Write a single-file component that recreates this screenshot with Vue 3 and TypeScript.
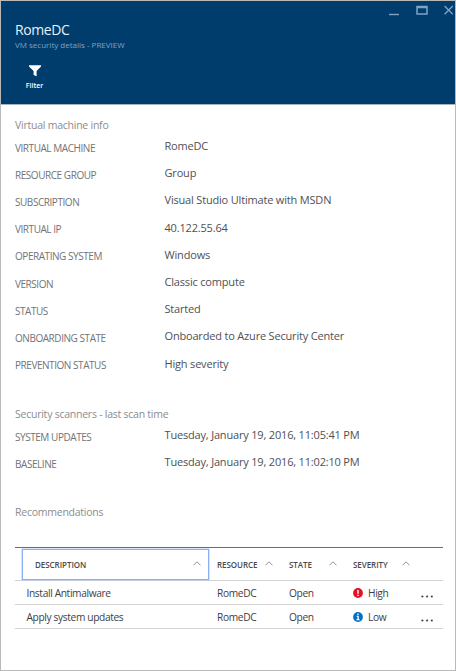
<script setup lang="ts">
interface Field { label: string; value: string }
interface Recommendation { description: string; resource: string; state: string; severity: 'High' | 'Low' }

const vmInfo: Field[] = [
  { label: 'VIRTUAL MACHINE', value: 'RomeDC' },
  { label: 'RESOURCE GROUP', value: 'Group' },
  { label: 'SUBSCRIPTION', value: 'Visual Studio Ultimate with MSDN' },
  { label: 'VIRTUAL IP', value: '40.122.55.64' },
  { label: 'OPERATING SYSTEM', value: 'Windows' },
  { label: 'VERSION', value: 'Classic compute' },
  { label: 'STATUS', value: 'Started' },
  { label: 'ONBOARDING STATE', value: 'Onboarded to Azure Security Center' },
  { label: 'PREVENTION STATUS', value: 'High severity' },
]
const scans: Field[] = [
  { label: 'SYSTEM UPDATES', value: 'Tuesday, January 19, 2016, 11:05:41 PM' },
  { label: 'BASELINE', value: 'Tuesday, January 19, 2016, 11:02:10 PM' },
]
const columns: string[] = ['DESCRIPTION', 'RESOURCE', 'STATE', 'SEVERITY']
const recommendations: Recommendation[] = [
  { description: 'Install Antimalware', resource: 'RomeDC', state: 'Open', severity: 'High' },
  { description: 'Apply system updates', resource: 'RomeDC', state: 'Open', severity: 'Low' },
]
</script>

<template>
  <main class="blade">
    <header class="head">
      <div class="controls">
        <svg width="64" height="12" viewBox="0 0 64 12">
          <path d="M0 10.5h10" stroke="#7fa3c4" stroke-width="1.4" />
          <path d="M28 2.5h10v7.6h-10z M28 3.4h10" fill="none" stroke="#7fa3c4" stroke-width="1.5" />
          <path d="M55.6 2l8.2 8.2M63.8 2l-8.2 8.2" stroke="#7fa3c4" stroke-width="1.4" />
        </svg>
      </div>
      <h1 class="title">RomeDC</h1>
      <p class="subtitle">VM security details - PREVIEW</p>
      <button class="filter" type="button">
        <svg width="12" height="12" viewBox="0 0 12 12">
          <path d="M0 0.3h12v1.2L7.6 6v5.2L4.6 10V6L0 1.5z" fill="#fff" />
        </svg>
        <span>Filter</span>
      </button>
    </header>

    <section class="section vm">
      <h2>Virtual machine info</h2>
      <dl>
        <div v-for="f in vmInfo" :key="f.label" class="field">
          <dt>{{ f.label }}</dt>
          <dd>{{ f.value }}</dd>
        </div>
      </dl>
    </section>

    <section class="section scans">
      <h2>Security scanners - last scan time</h2>
      <dl>
        <div v-for="f in scans" :key="f.label" class="field">
          <dt>{{ f.label }}</dt>
          <dd>{{ f.value }}</dd>
        </div>
      </dl>
    </section>

    <section class="section recs">
      <h2>Recommendations</h2>
      <div class="table">
        <div class="row header">
          <div v-for="(c, i) in columns" :key="c" class="th" :class="{ focused: i === 0, last: i === 3 }">
            <span>{{ c }}</span>
            <svg width="8" height="5" viewBox="0 0 8 5">
              <path d="M0.5 4.3L4 0.8l3.5 3.5" fill="none" stroke="#888" stroke-width="0.9" />
            </svg>
          </div>
        </div>
        <div v-for="r in recommendations" :key="r.description" class="row">
          <div class="td first">{{ r.description }}</div>
          <div class="td">{{ r.resource }}</div>
          <div class="td">{{ r.state }}</div>
          <div class="td severity">
            <svg width="10" height="10" viewBox="0 0 10 10">
              <circle cx="5" cy="5" r="4.9" :fill="r.severity === 'High' ? '#e81123' : '#0072c6'" />
              <path v-if="r.severity === 'High'" d="M5 1.9v3.9M5 6.7v1.4" stroke="#fff" stroke-width="1.4" />
              <path v-else d="M5 1.6v1.4M3.8 4.3H5.1v3.4M3.6 7.7h2.9" fill="none" stroke="#fff" stroke-width="1.3" />
            </svg>
            <span>{{ r.severity }}</span>
          </div>
          <div class="more">
            <svg width="13" height="3" viewBox="0 0 13 3">
              <circle cx="1.4" cy="1.5" r="1.1" fill="#444" />
              <circle cx="6.1" cy="1.5" r="1.1" fill="#444" />
              <circle cx="10.8" cy="1.5" r="1.1" fill="#444" />
            </svg>
          </div>
        </div>
      </div>
    </section>
  </main>
</template>

<style>
body { margin: 0; background: #fff; }
</style>

<style scoped>
.blade {
  box-sizing: border-box;
  width: 456px;
  height: 671px;
  border: 1px solid #b9b9b9;
  background: #fff;
  font-family: "Open Sans", "Noto Sans", sans-serif;
  font-size: 11px;
  color: #505054;
  overflow: hidden;
}
h1, h2, p, dl, dd { margin: 0; font-weight: 400; }
svg { display: block; flex: none; }
.head {
  box-sizing: border-box;
  height: 104px;
  padding-left: 14px;
  background: #003c6c;
  border-bottom: 1px solid #a9b4bd;
}
.controls { display: flex; justify-content: flex-end; height: 19px; padding-top: 3px; box-sizing: border-box; padding-right: 2px; }
.title { height: 20px; line-height: 20px; font-size: 14px; letter-spacing: -0.4px; color: #e6f1fa; }
.subtitle { height: 10px; line-height: 10px; font-size: 8px; color: #7fa3c4; }
.filter {
  display: flex;
  flex-direction: column;
  align-items: center;
  width: 39px;
  margin: 15px 0 0;
  padding: 0;
  border: 0;
  background: none;
  color: #fff;
  font: 600 7px/10px "Open Sans", sans-serif;
  gap: 4px;
}
.section { padding: 0 12px 0 14px; }
.section h2 { height: 18px; line-height: 18px; font-size: 10.5px; letter-spacing: -0.24px; color: #8c8c90; }
.vm { padding-top: 11px; height: 289px; box-sizing: border-box; }
.scans { padding-top: 11px; height: 98px; box-sizing: border-box; }
.field { display: grid; grid-template-columns: 149.5px 1fr; height: 27.2px; line-height: 18px; }
dt { padding-top: 4.6px; font-size: 10px; letter-spacing: -0.45px; color: #737377; }
dd { padding-top: 3px; letter-spacing: -0.18px; }
.recs { padding-top: 11px; }
.table { margin-top: 26px; border-top: 1px solid #6c6c6c; }
.row {
  display: grid;
  grid-template-columns: 202px 72px 64px 66px 1fr;
  align-items: center;
  height: 24px;
  box-sizing: border-box;
  border-bottom: 1px solid #d4d4d4;
}
.row.header { height: 33px; }
.th {
  display: flex;
  align-items: center;
  justify-content: space-between;
  height: 31px;
  box-sizing: border-box;
  padding-right: 16px;
  font-size: 8px;
  font-weight: 600;
  letter-spacing: -0.05px;
  color: #4a4a4e;
}
.th.last { padding-right: 9px; }
.th svg { margin-top: -2px; }
.focused { margin: 0 8px 0 7px; padding: 0 7px 0 12px; border: 1px solid #8aaef8; box-shadow: 0 0 0 0.5px #b4cafa; }
.td { line-height: 20px; white-space: nowrap; font-size: 10.2px; letter-spacing: -0.36px; color: #3e3e42; }
.first { padding-left: 11.5px; }
.severity { display: flex; align-items: center; gap: 5px; }
.more { padding: 8px 0 0 2px; }
</style>
